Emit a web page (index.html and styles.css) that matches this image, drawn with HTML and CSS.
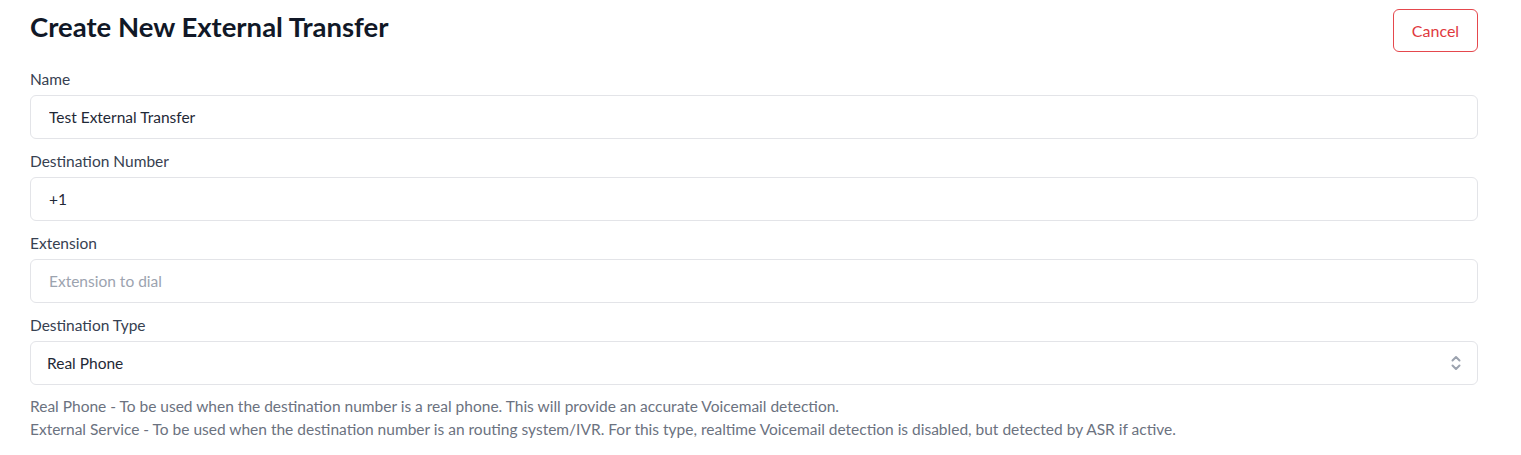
FILE: index.html
```html
<!DOCTYPE html>
<html lang="en">
<head>
<meta charset="utf-8">
<title>Create New External Transfer</title>
<link rel="stylesheet" href="styles.css">
</head>
<body>
<div class="page">
  <div class="header">
    <h1 class="title">Create New External Transfer</h1>
    <button class="cancel" type="button">Cancel</button>
  </div>
  <form class="form">
    <div class="field">
      <label class="label">Name</label>
      <input class="input" type="text" value="Test External Transfer">
    </div>
    <div class="field">
      <label class="label">Destination Number</label>
      <input class="input" type="text" value="+1">
    </div>
    <div class="field">
      <label class="label">Extension</label>
      <input class="input" type="text" placeholder="Extension to dial">
    </div>
    <div class="field">
      <label class="label">Destination Type</label>
      <div class="select-wrap">
        <select class="select">
          <option>Real Phone</option>
          <option>External Service</option>
        </select>
        <svg class="chevron" width="12" height="18" viewBox="0 0 12 18" fill="none" stroke="currentColor" stroke-width="2" stroke-linecap="round" stroke-linejoin="round"><path d="M2.5 6.5 L6 3 L9.5 6.5"/><path d="M2.5 11.5 L6 15 L9.5 11.5"/></svg>
      </div>
      <div class="help">
        <div>Real Phone - To be used when the destination number is a real phone. This will provide an accurate Voicemail detection.</div>
        <div>External Service - To be used when the destination number is an routing system/IVR. For this type, realtime Voicemail detection is disabled, but detected by ASR if active.</div>
      </div>
    </div>
  </form>
</div>
</body>
</html>
```

FILE: styles.css
```css
* { box-sizing: border-box; }
html, body { margin: 0; padding: 0; background: #ffffff; }
body {
  font-family: Lato, "Liberation Sans", sans-serif;
  color: #1f2937;
}
.page {
  padding: 9px 43px 0 30px;
}
.header {
  display: flex;
  justify-content: space-between;
  align-items: flex-start;
}
.title {
  margin: 0;
  font-size: 27.5px;
  font-weight: 700;
  line-height: 36px;
  color: #111827;
}
.cancel {
  width: 85px;
  height: 43px;
  border: 1px solid #e5484d;
  border-radius: 6px;
  background: #fff;
  color: #e0393e;
  font-family: inherit;
  font-size: 16px;
}
.form {
  display: flex;
  flex-direction: column;
  margin-top: 15px;
}
.field {
  display: flex;
  flex-direction: column;
  margin-bottom: 10px;
}
.label {
  font-size: 15.5px;
  line-height: 24px;
  color: #374151;
  margin-bottom: 4px;
}
.input, .select {
  width: 100%;
  height: 44px;
  border: 1px solid #e3e4e8;
  border-radius: 6px;
  background: #fff;
  font-family: inherit;
  font-size: 15.5px;
  color: #1f2937;
  padding: 0 18px;
  outline: none;
}
.input::placeholder { color: #9ca3af; }
.select-wrap { position: relative; }
.select {
  appearance: none;
  -webkit-appearance: none;
  padding-left: 16px;
}
.chevron {
  position: absolute;
  right: 16px;
  top: 13px;
  color: #9ca3af;
  pointer-events: none;
}
.help {
  margin-top: 10px;
  font-size: 15.5px;
  line-height: 23px;
  color: #6b7280;
}
```
